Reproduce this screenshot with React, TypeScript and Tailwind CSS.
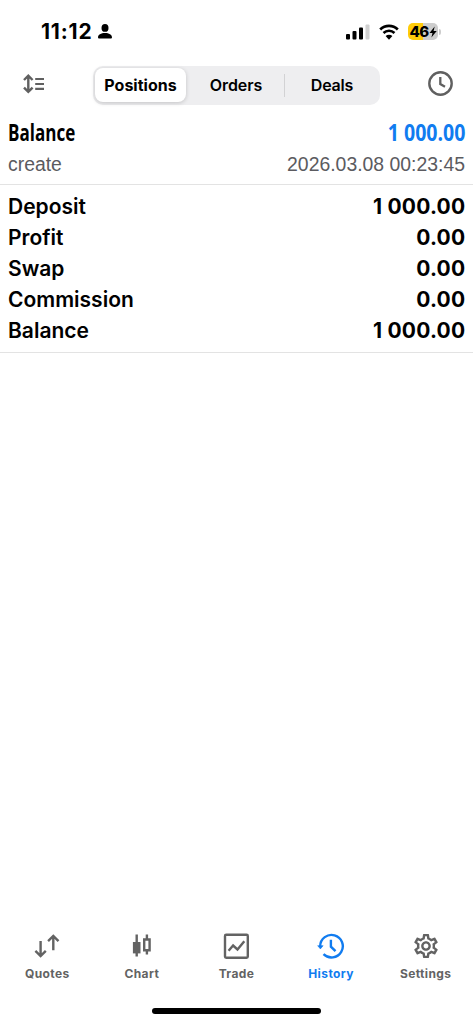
import type { ReactNode } from "react";
import { MdOutlineSettings } from "react-icons/md";

interface SummaryRow {
  label: string;
  value: string;
}

interface Tab {
  label: string;
  icon: ReactNode;
  active?: boolean;
}

const summary: SummaryRow[] = [
  { label: "Deposit", value: "1 000.00" },
  { label: "Profit", value: "0.00" },
  { label: "Swap", value: "0.00" },
  { label: "Commission", value: "0.00" },
  { label: "Balance", value: "1 000.00" },
];

const tabs: Tab[] = [
  {
    label: "Quotes",
    icon: (
      <path
        d="M7.6 9v15.200M2.400 18.900l5.200 5.200 5.200-5.200M20.300 18.200V4M15.100 9.200l5.200-5.200 5.200 5.200"
        stroke="currentColor"
        strokeWidth="2.400"
      />
    ),
  },
  {
    label: "Chart",
    icon: (
      <>
        <path d="M8.700 2.500v22M18.900 2.500v5M18.900 18v4.500" stroke="currentColor" strokeWidth="2.400" />
        <path d="M4.900 10h7.600v11.400H4.900z" fill="currentColor" />
        <path d="M16.200 7.500h5.400v10.800h-5.400z" stroke="currentColor" strokeWidth="2.400" />
      </>
    ),
  },
  {
    label: "Trade",
    icon: (
      <>
        <rect x="3" y="2.700" width="22.800" height="23" rx="1.200" stroke="currentColor" strokeWidth="2.400" />
        <path d="M6.600 18.700l4.500-5.200 4.400 4 6.800-8.300" stroke="currentColor" strokeWidth="2.400" />
      </>
    ),
  },
  {
    label: "History",
    active: true,
    icon: (
      <>
        <path
          d="M3.200 14a11.300 11.300 0 1 1 3.300 8.200M13.900 7.800v6.900l4.600 4.500"
          stroke="currentColor"
          strokeWidth="2.400"
        />
        <path d="M.700 13.700h5.400l-2.700 3.200z" fill="currentColor" stroke="currentColor" strokeWidth=".6" />
      </>
    ),
  },
  {
    label: "Settings",
    icon: <MdOutlineSettings x="-0.500" y="-0.500" size={29} />,
  },
];

function StatusBar() {
  return (
    <div className="flex h-[63px] items-center justify-between pr-[32px] pl-[41px]">
      <div className="flex items-center gap-[6px]">
        <span className="text-[21px] font-bold tracking-[0.8px]">11:12</span>
        <svg className="h-[15px] w-[14px]" viewBox="0 0 14 15" fill="currentColor">
          <ellipse cx="7" cy="3.900" rx="3.500" ry="3.900" />
          <path d="M0 13.300C0 10.500 3 8.900 7 8.900s7 1.600 7 4.400c0 .9-.5 1.300-1.400 1.300H1.400C.5 14.600 0 14.200 0 13.300z" />
        </svg>
      </div>
      <div className="flex items-center">
        {/* signal */}
        <svg className="h-[16px] w-[24px]" viewBox="0 0 24 16" fill="currentColor">
          <rect x="0" y="10" width="4" height="5.500" rx="1" />
          <rect x="6.500" y="7" width="4" height="8.500" rx="1" />
          <rect x="13" y="3.500" width="4" height="12" rx="1" />
          <rect x="19.500" y=".5" width="4" height="15" rx="1" fill="#d0d0d0" />
        </svg>
        {/* wifi */}
        <svg className="ml-[9px] h-[16px] w-[20px]" viewBox="0 0 20 16" fill="none">
          <path d="M1.200 5.500a12.700 12.700 0 0 1 17.600 0" stroke="currentColor" strokeWidth="2.700" />
          <path d="M4.500 9a8 8 0 0 1 11 0" stroke="currentColor" strokeWidth="2.600" />
          <path d="M10 15.700l-3.400-3.600a4.900 4.900 0 0 1 6.800 0z" fill="currentColor" />
        </svg>
        {/* battery */}
        <div className="ml-[9px] flex h-[17px] w-[30px] items-center justify-center rounded-[5px] bg-[linear-gradient(90deg,#ffcc0a_50%,#cdcdcd_50%)]">
          <span className="text-[15px] leading-none font-extrabold tracking-[-0.6px]">46</span>
          <svg className="h-[12px] w-[8px]" viewBox="0 0 8 12" fill="currentColor">
            <path d="M5.700.5L.5 6.900h3L2.400 11.500 7.700 5H4.600z" />
          </svg>
        </div>
        <span className="ml-[1px] h-[6px] w-[2px] rounded-r-full bg-[#cdcdcd]" />
      </div>
    </div>
  );
}

function Toolbar() {
  return (
    <div className="flex h-[44px] items-center pr-[20px] pl-[23px]">
      <svg className="mb-[3px] h-[20px] w-[22px] text-[#606060]" viewBox="0 0 22 20" fill="none" stroke="currentColor">
        <path d="M5.300 2.200v15.200M1 6l4.300-4.300L9.600 6M1 13.600l4.300 4.300 4.300-4.300" strokeWidth="2.400" />
        <path d="M12.200 5h8.800M12.200 10h8.800M12.200 14.900h8.800" strokeWidth="2.200" />
      </svg>
      <div className="ml-[48px] flex h-[39px] w-[287px] items-center rounded-[10px] bg-[#eeeef0] p-[2px] text-[16px] font-semibold">
        <div className="flex h-[34px] w-[91px] items-center justify-center rounded-[8px] bg-white font-bold shadow-[0_1px_4px_rgba(0,0,0,0.18)]">
          Positions
        </div>
        <div className="flex h-full w-[98px] items-center justify-center pl-[2px] tracking-[-0.1px]">Orders</div>
        <span className="h-[23px] w-px bg-[#d2d2d4]" />
        <div className="flex h-full flex-1 items-center justify-center pl-[1px] tracking-[-0.2px]">Deals</div>
      </div>
      <svg className="mb-[4px] ml-auto h-[25px] w-[25px] text-[#606060]" viewBox="0 0 25 25" fill="none" stroke="currentColor">
        <circle cx="12.500" cy="12.500" r="11.200" strokeWidth="2.400" />
        <path d="M12.300 6v7l4.700 2.700" strokeWidth="2.300" />
      </svg>
    </div>
  );
}

function BalanceOperation() {
  return (
    <div className="h-[78px] border-b border-[#e3e3e3] px-[8px] pt-[8px]">
      <div className="flex h-[34px] items-center justify-between font-['Open_Sans',sans-serif] text-[23px]">
        <span className="origin-left scale-x-[0.74] font-bold">Balance</span>
        <span className="origin-right scale-x-[0.85] font-bold text-[#117cf0]">1 000.00</span>
      </div>
      <div className="flex h-[31px] items-center justify-between font-['Liberation_Sans',sans-serif] text-[19.400px] text-[#5b5b60]">
        <span>create</span>
        <span>2026.03.08 00:23:45</span>
      </div>
    </div>
  );
}

function Summary() {
  return (
    <dl className="h-[168px] border-b border-[#e3e3e3] px-[8px] pt-[6px] text-[21px]">
      {summary.map((row) => (
        <div key={row.label} className="flex h-[31px] items-center justify-between">
          <dt className="font-[580]">{row.label}</dt>
          <dd className="-mr-[0.300px] font-[650] tracking-[0.2px]">{row.value}</dd>
        </div>
      ))}
    </dl>
  );
}

function TabBar() {
  return (
    <nav className="grid h-[76px] grid-cols-5">
      {tabs.map((tab) => (
        <div
          key={tab.label}
          className={
            tab.active
              ? "flex flex-col items-center text-[#117cf0]"
              : "flex flex-col items-center text-[#636363]"
          }
        >
          <svg className="h-[28px] w-[28px]" viewBox="0 0 28 28" fill="none">
            {tab.icon}
          </svg>
          <span className="mt-[5px] text-[12px] leading-[18px] font-bold tracking-[0.400px]">{tab.label}</span>
        </div>
      ))}
    </nav>
  );
}

export default function App() {
  return (
    <div className="flex h-screen w-full flex-col overflow-hidden bg-white font-[Inter,sans-serif] text-black">
      <StatusBar />
      <Toolbar />
      <BalanceOperation />
      <Summary />
      <div className="flex-1" />
      <TabBar />
      <div className="flex h-[16px] justify-center">
        <div className="h-[6px] w-[169px] rounded-full bg-black" />
      </div>
    </div>
  );
}
